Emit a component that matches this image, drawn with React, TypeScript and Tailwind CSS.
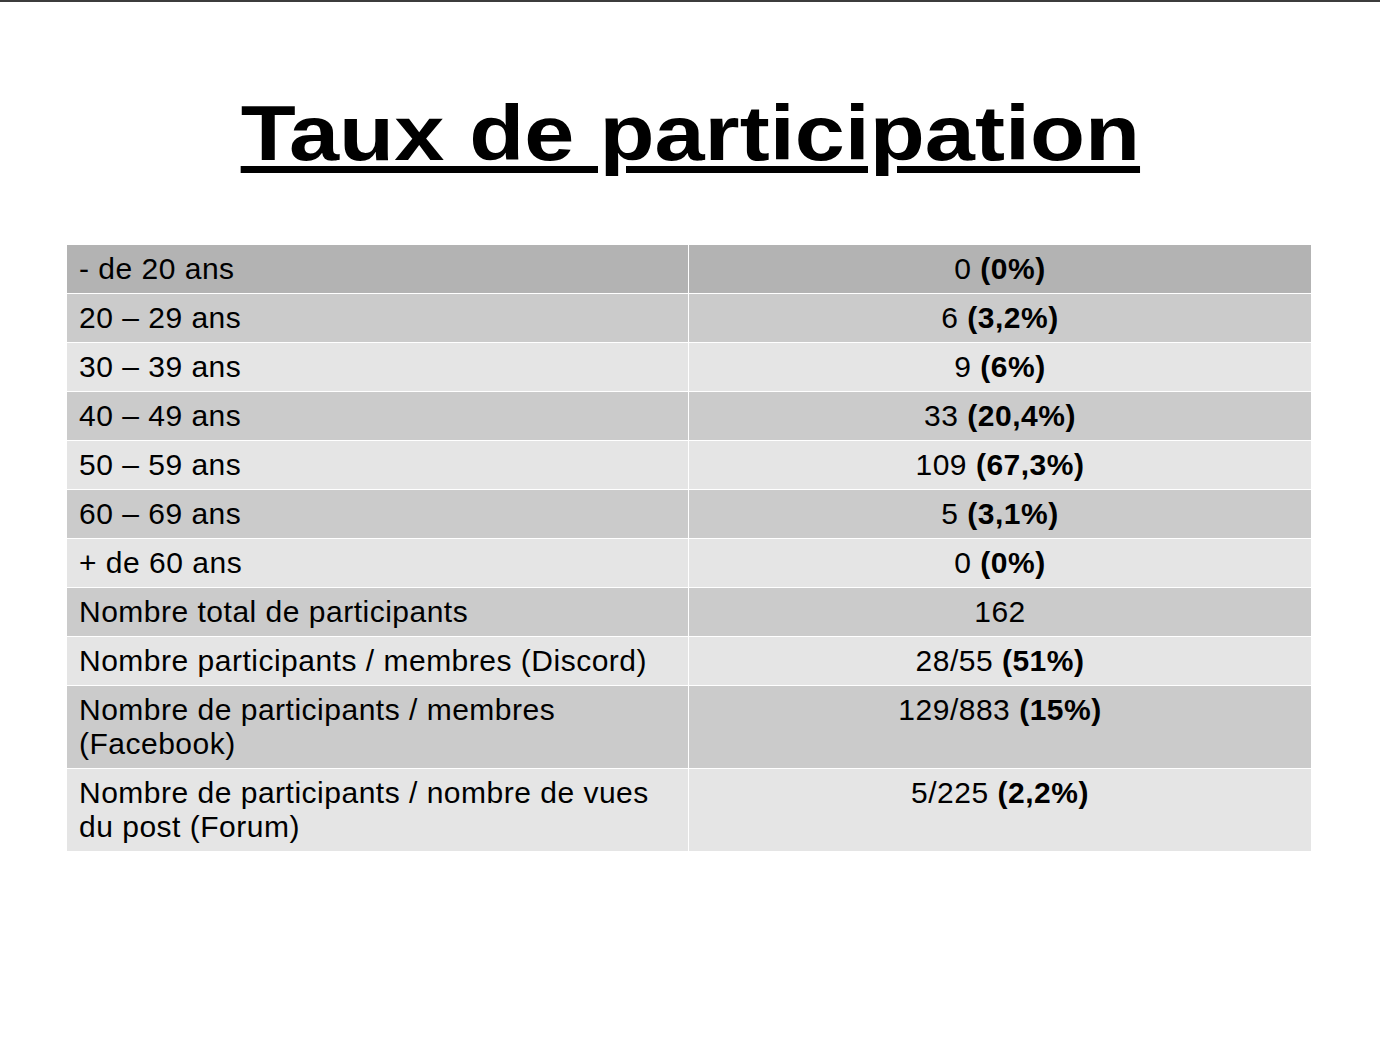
const rows: { label: string; value: string; pct?: string; shade: string }[] = [
  { label: "- de 20 ans", value: "0", pct: "0%", shade: "bg-[#b3b3b3]" },
  { label: "20 – 29 ans", value: "6", pct: "3,2%", shade: "bg-[#cbcbcb]" },
  { label: "30 – 39 ans", value: "9", pct: "6%", shade: "bg-[#e5e5e5]" },
  { label: "40 – 49 ans", value: "33", pct: "20,4%", shade: "bg-[#cbcbcb]" },
  { label: "50 – 59 ans", value: "109", pct: "67,3%", shade: "bg-[#e5e5e5]" },
  { label: "60 – 69 ans", value: "5", pct: "3,1%", shade: "bg-[#cbcbcb]" },
  { label: "+ de 60 ans", value: "0", pct: "0%", shade: "bg-[#e5e5e5]" },
  { label: "Nombre total de participants", value: "162", shade: "bg-[#cbcbcb]" },
  { label: "Nombre participants / membres (Discord)", value: "28/55", pct: "51%", shade: "bg-[#e5e5e5]" },
  { label: "Nombre de participants / membres (Facebook)", value: "129/883", pct: "15%", shade: "bg-[#cbcbcb]" },
  { label: "Nombre de participants / nombre de vues du post (Forum)", value: "5/225", pct: "2,2%", shade: "bg-[#e5e5e5]" }
];

export default function App() {
  return (
    <div className="min-h-[1037px] w-[1380px] bg-white font-['Liberation_Sans',Arial,sans-serif] text-black">
      <div className="h-[2px] w-full bg-[#3c3c3c]" />

      {/* the slide title is stretched wider than plain Arial Bold */}
      <h1 className="mt-[91px] text-center text-[77px] font-bold leading-[80px]">
        <span className="inline-block scale-x-[1.17] underline decoration-[7px] underline-offset-[6px]">
          Taux de participation
        </span>
      </h1>

      <div className="ml-[67px] mt-[72px] flex w-[1244px] flex-col gap-px bg-white">
        {rows.map((r) => (
          <div key={r.label} className="flex gap-px text-[30px] leading-[34px] tracking-[0.5px]">
            <div className={`w-[621px] px-[12px] py-[7px] ${r.shade}`}>{r.label}</div>
            <div className={`flex-1 py-[7px] text-center ${r.shade}`}>
              {r.value}
              {r.pct && (
                <>
                  {" "}
                  <span className="font-bold">({r.pct})</span>
                </>
              )}
            </div>
          </div>
        ))}
      </div>
    </div>
  );
}
